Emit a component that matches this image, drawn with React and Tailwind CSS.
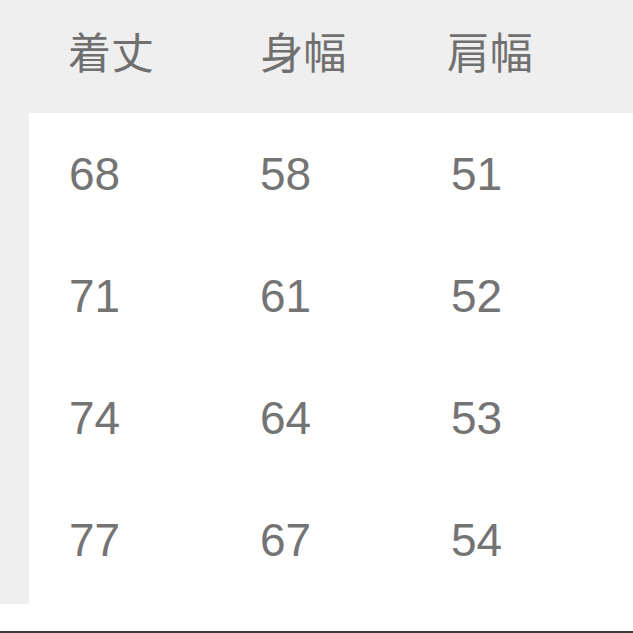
export default function App() {
  const header = [
    ["着丈", "w-[194px]"],
    ["身幅", "w-[188px]"],
    ["肩幅", "w-[188px]"],
  ];
  const rows = [
    ["68", "58", "51"],
    ["71", "61", "52"],
    ["74", "64", "53"],
    ["77", "67", "54"],
  ];
  return (
    <div className="w-[633px] h-[633px] bg-white flex flex-col overflow-hidden">
      <div className="h-[113px] bg-[#efefef] flex items-center pl-[68px] pb-[12px] shrink-0">
        {header.map(([h, w]) => (
          <div
            key={h}
            className={`${w} text-[43px] leading-none text-[#707070] font-['Noto_Sans_CJK_JP',sans-serif]`}
          >
            {h}
          </div>
        ))}
      </div>
      <div className="flex h-[491px] shrink-0">
        <div className="w-[29px] bg-[#efefef] shrink-0" />
        <div className="flex-1 flex flex-col pl-[40px]">
          {rows.map((r, i) => (
            <div key={i} className="h-[122px] flex items-center">
              {r.map((v, j) => (
                <div
                  key={j}
                  className="w-[191px] text-[46px] leading-none text-[#747474] font-['Liberation_Sans',Arial,sans-serif]"
                >
                  {v}
                </div>
              ))}
            </div>
          ))}
        </div>
      </div>
      <div className="flex-1 bg-white" />
      <div className="h-[2px] bg-[#3a3a3a] shrink-0" />
    </div>
  );
}
